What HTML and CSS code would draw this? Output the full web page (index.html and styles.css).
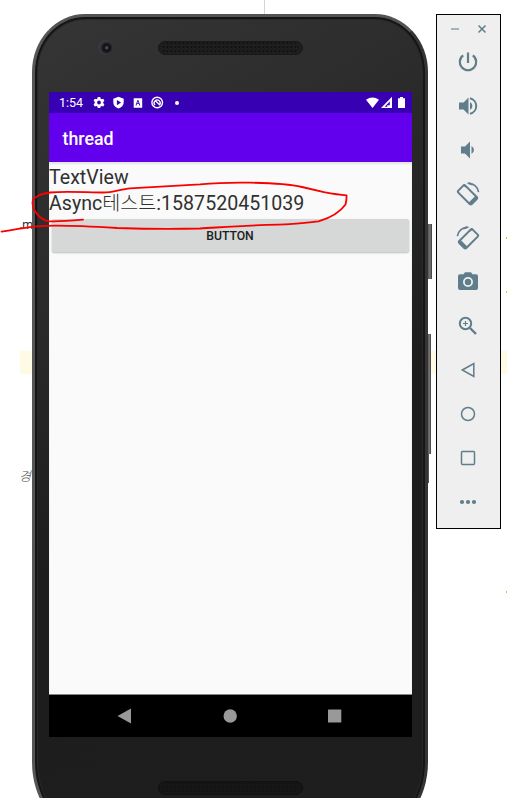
FILE: index.html
```html
<!DOCTYPE html>
<html lang="ko">
<head>
<meta charset="utf-8">
<title>thread</title>
<link rel="stylesheet" href="styles.css">
</head>
<body>
<main class="desktop">
  <div class="editor-guide"></div>
  <div class="editor-line"></div>
  <span class="editor-text import">m</span>
  <span class="editor-text path">경</span>
  <i class="mark mark-a"></i><i class="mark mark-b"></i><i class="mark mark-c"></i><i class="mark mark-d"></i>

  <section class="phone">
    <i class="side-key power-key"></i><i class="side-key volume-key"></i><i class="side-key edge-key"></i>
    <div class="bezel">
      <header class="phone-top">
        <i class="camera"></i>
        <svg class="speaker" width="145" height="14"><defs><pattern id="holes" width="4" height="4" patternUnits="userSpaceOnUse"><circle cx="1.5" cy="2" r="1.1"/></pattern></defs><rect class="grille" x=".5" y=".5" width="144" height="13" rx="6.5"/><rect x="4" y="1" width="137" height="12" rx="5" fill="url(#holes)"/></svg>
      </header>
      <div class="screen">
        <div class="status">
          <span class="time">1:54</span>
          <svg class="status-icons" width="71" height="14" viewBox="0 0 71 14" fill="#fff">
            <path fill-rule="evenodd" d="M4.8 1h2.400l.4 1.600 1 .6 1.600-.5 1.200 2-1.200 1.200v1.200l1.200 1.300-1.200 2-1.600-.5-1 .5-.4 1.600H4.800l-.4-1.600-1-.5-1.600.5-1.200-2 1.200-1.300V5.900L.6 4.700l1.200-2 1.600.5 1-.6zM6 4.600a1.900 1.900 0 1 0 0 3.800 1.900 1.900 0 0 0 0-3.800z"/>
            <path fill-rule="evenodd" d="M25.500.7 30.700 2.700V6.500c0 3-2.200 5-5.200 6-3-1-5.200-3-5.200-6V2.700zM23.900 4v5.200l4.200-2.600z"/>
            <path fill-rule="evenodd" d="M40.700 2.300h8.500v9.400h-8.500zm3.800 1.800-2 5.300h1l.4-1.300h2l.4 1.300h1l-2-5.300zm.4 1.300.7 1.900h-1.400z"/>
            <circle cx="64.200" cy="6.500" r="5.300" fill="none" stroke="#fff" stroke-width="1.400"/>
            <path d="M62 9.100a3 3 0 1 1 4.300 0M62.200 4.500l4.800 4.800" fill="none" stroke="#fff" stroke-width="1.300"/>
          </svg>
          <i class="dot"></i>
          <svg class="signals" width="40" height="14" viewBox="0 0 40 14" fill="#fff"><path d="M0 3.700Q6.500-.5 13 3.700L6.500 12z"/><path fill-rule="evenodd" d="M26 .8V12H15zM23.800 5.500 18.700 10.700h2.500V9.200h2.600z"/><path d="M32 2.200h2V1h3v1.200h2V12h-7z"/></svg>
        </div>
        <div class="appbar">thread</div>
        <div class="content">
          <div class="text">TextView</div>
          <div class="text result">Async<span class="hangul">테스트</span>:1587520451039</div>
          <button class="button">BUTTON</button>
        </div>
        <nav class="nav">
          <svg width="363" height="42" fill="#999"><path d="M68.500 21 82 13.500v15z"/><circle cx="181.200" cy="21" r="6.700"/><rect x="279" y="14.500" width="13.300" height="13" rx=".5"/></svg>
        </nav>
      </div>
      <footer class="phone-bottom">
        <svg class="speaker" width="145" height="14"><rect class="grille" x=".5" y=".5" width="144" height="13" rx="6.5"/><rect x="4" y="1" width="137" height="12" rx="5" fill="url(#holes)"/></svg>
      </footer>
    </div>
  </section>

  <aside class="toolbar">
    <div class="window-controls">
      <svg width="10" height="12"><path d="M1 6h8" stroke="#a4b3ba" stroke-width="2"/></svg>
      <svg width="10" height="12"><path d="m1.500 2.500 7 7m0-7-7 7" stroke="#607d8b" stroke-width="1.500"/></svg>
    </div>
    <div class="tools">
      <svg viewBox="0 0 24 24"><path d="M12 2.500V13M7.200 5.400a8.200 8.200 0 1 0 9.600 0" fill="none" stroke="#607d8b" stroke-width="2.200"/></svg>
      <svg viewBox="0 0 24 24"><path d="M3 8.500h4.500l5-5v17l-5-5H3zM14 8a4.500 4.500 0 0 1 0 8z"/><path d="M14 4.200a8 8 0 0 1 0 15.600" fill="none" stroke="#607d8b" stroke-width="2"/></svg>
      <svg viewBox="0 0 24 24"><path d="M5 8.500h4l5-5v17l-5-5H5zM15.500 8a4.500 4.500 0 0 1 0 8z"/></svg>
      <svg class="wide" viewBox="0 0 26 26"><use href="#rotate"/></svg>
      <svg class="wide" viewBox="0 0 26 26"><g transform="translate(26 0) scale(-1 1)"><g id="rotate"><path d="M10.300 4.600 21.700 16c.7.7.7 1.300 0 2l-5 5c-.7.7-1.300.7-2 0L3.300 11.600c-.7-.7-.7-1.300 0-2l5-5c.7-.7 1.300-.7 2 0z" fill="none" stroke="#607d8b" stroke-width="2"/><path d="m7.600 4.300 1.700-1.200 3 2.400-1.200 1.300zM13.500 21.700l7.300-7.300 2.300 2.500-6.300 6.600z"/><path d="M13 2.500c5.500-.5 9.800 3.300 10.600 8.700" fill="none" stroke="#607d8b" stroke-width="1.600"/><path d="m11.500 2 4-.8 2.200 3.600z"/></g></g></svg>
      <svg viewBox="0 0 24 24"><path fill-rule="evenodd" d="M4 4.200h3.500L9 2.200h6l1.500 2H20a2 2 0 0 1 2 2V18a2 2 0 0 1-2 2H4a2 2 0 0 1-2-2V6.200a2 2 0 0 1 2-2zM12 7a5 5 0 1 0 0 10 5 5 0 0 0 0-10z"/><circle cx="12" cy="12" r="3.200"/></svg>
      <svg viewBox="0 0 24 24" fill="none" stroke="#607d8b"><circle cx="9.500" cy="9.500" r="5.700" stroke-width="2"/><path d="m14 14 6 6" stroke-width="2.400"/><path d="M7 9.500h5M9.500 7v5" stroke-width="1.200"/></svg>
      <svg viewBox="0 0 24 24"><path d="M6.300 12 17.800 5.500v13z" fill="none" stroke="#607d8b" stroke-width="1.500"/></svg>
      <svg viewBox="0 0 24 24"><circle cx="12" cy="12" r="6.500" fill="none" stroke="#607d8b" stroke-width="1.500"/></svg>
      <svg viewBox="0 0 24 24"><rect x="5.500" y="5.500" width="13" height="13" rx="1" fill="none" stroke="#607d8b" stroke-width="1.500"/></svg>
      <svg viewBox="0 0 24 24"><circle cx="6" cy="12" r="2.100"/><circle cx="12" cy="12" r="2.100"/><circle cx="18" cy="12" r="2.100"/></svg>
    </div>
  </aside>

  <svg class="annotation" width="507" height="798"><path d="M83 219.700C68 221 58 221.700 49 221.300 40 220 33 211 32.500 203 32 198 39 194 50 192.500c15-1.500 38 0 53 0C113 192.500 121 189 130 188.300L200 184.300C220 182.500 237 182.500 250 182.700c22 .3 38 1 52 4.300l22 5.200c8 1.500 15 2.700 22.500 3.200.3 4-.5 7-1 9-5 7-14 13-27 17-14 1.500-25 3-40 3.200C245 225.300 225 227 200 228.500 165 229.500 140 228.800 117 228 92 226.500 55 224.500 37 226.400 24 227.500 12 230 1.500 231.700"/></svg>
</main>
</body>
</html>
```
FILE: styles.css
```css
* { box-sizing: border-box; }
body { margin: 0; background: #fff; overflow: hidden; font-family: Roboto, "Noto Sans CJK KR", sans-serif; }
svg { display: block; flex: none; }
.desktop { position: relative; display: flex; align-items: flex-start; gap: 8px; width: 507px; height: 798px; padding: 14px 0 0 32px; overflow: hidden; }

.editor-guide { position: absolute; left: 264px; top: 0; width: 1px; height: 14px; background: #d3d3d3; }
.editor-line { position: absolute; left: 20px; top: 351px; width: 487px; height: 23px; background: #fffae3; }
.editor-text { position: absolute; white-space: nowrap; }
.import { left: 22px; top: 217px; font: 12px/15px "Open Sans", sans-serif; color: #222; }
.path { left: 19px; top: 467px; font: italic 300 13px/18px "Noto Sans CJK KR", sans-serif; color: #555; }
.mark { position: absolute; left: 506px; width: 1px; height: 2px; background: #e6c700; }
.mark-a { top: 237px; }
.mark-b { top: 291px; }
.mark-c { top: 591px; }
.mark-d { left: 20px; top: 227px; width: 2px; background: #a87b20; }

.phone { position: relative; flex: none; width: 396px; height: 816px; }
.side-key { position: absolute; background: linear-gradient(90deg, #444, #777 60%, #3b3839); }
.power-key { left: 395px; top: 210px; width: 5px; height: 55px; }
.volume-key { left: 395px; top: 320px; width: 4px; height: 120px; }
.edge-key { left: 394px; top: 440px; width: 3px; height: 29px; }
.bezel { position: relative; height: 100%; padding: 0 13px 0 14px; border: 3px solid #565656; border-top-color: #545454; border-right-color: #363536; border-radius: 53px 53px 50px 50px / 58px 58px 68px 68px; background: linear-gradient(150deg, #353535, #2c2c2c 25%, #1d1d1d 55%, #1e1e1e); box-shadow: inset 0 0 0 2px #161414, inset 0 0 0 3px #292929; }
.phone-top { display: flex; align-items: flex-start; height: 75px; padding-top: 23px; }
.camera { width: 15px; height: 15px; margin: 0 45px 0 49px; border-radius: 50%; background: radial-gradient(circle at 58% 52%, #654650 0 1px, #16151d 2px 4px, #333 6px, #393939 7px); }
.speaker { fill: #101010; }
.phone-top .speaker { margin-top: 1px; }
.grille { fill: #1e1e1e; stroke: #191919; }
.phone-bottom .grille { fill: #161616; stroke: #111; }
.screen { display: flex; flex-direction: column; width: 363px; height: 645px; background: #fafafa; }
.status { display: flex; align-items: center; height: 21px; padding: 0 6px 0 10px; background: #3700b3; color: #fff; }
.time { width: 34px; font-size: 12.5px; line-height: 21px; }
.status-icons { margin-top: 1px; }
.dot { width: 4px; height: 4px; margin-left: 11px; border-radius: 50%; background: #fff; }
.signals { margin-left: auto; }
.appbar { height: 49px; padding-left: 13.5px; background: #6200ee; color: #fff; font-size: 17.8px; font-weight: 500; line-height: 52px; }
.content { display: flex; flex: 1; flex-direction: column; border-bottom: 1px solid #858585; box-shadow: inset 0 2px 2px #e4e4e8; color: #303030; }
.text { height: 26px; font-size: 19.6px; line-height: 31px; white-space: nowrap; }
.result { height: 31px; }
.hangul { font-family: "Noto Sans CJK KR", sans-serif; font-weight: 300; line-height: 1; }
.button { height: 33px; margin: 0 3px; padding: 0 1px 0 0; border: 0; border-radius: 2px; background: #d6d7d7; box-shadow: 0 1px 2px #bbb; color: #202020; font: 500 12.2px/35px Roboto, sans-serif; }
.nav { height: 42px; background: #000; }
.phone-bottom { display: flex; padding: 44px 0 0 109px; }

.toolbar { position: relative; flex: none; width: 65px; height: 515px; border: 1px solid #000; background: #efefef; }
.window-controls { display: flex; justify-content: space-between; padding: 8px 13px 0; }
.tools { display: flex; flex-direction: column; align-items: center; gap: 20px; padding: 15px 2px 0 0; fill: #607d8b; }
.tools svg { width: 24px; height: 24px; }
.tools .wide { width: 26px; height: 26px; margin: -1px 0; }

.annotation { position: absolute; left: 0; top: 0; fill: none; stroke: #f80000; stroke-width: 1.8; stroke-linecap: round; stroke-linejoin: round; }
```
